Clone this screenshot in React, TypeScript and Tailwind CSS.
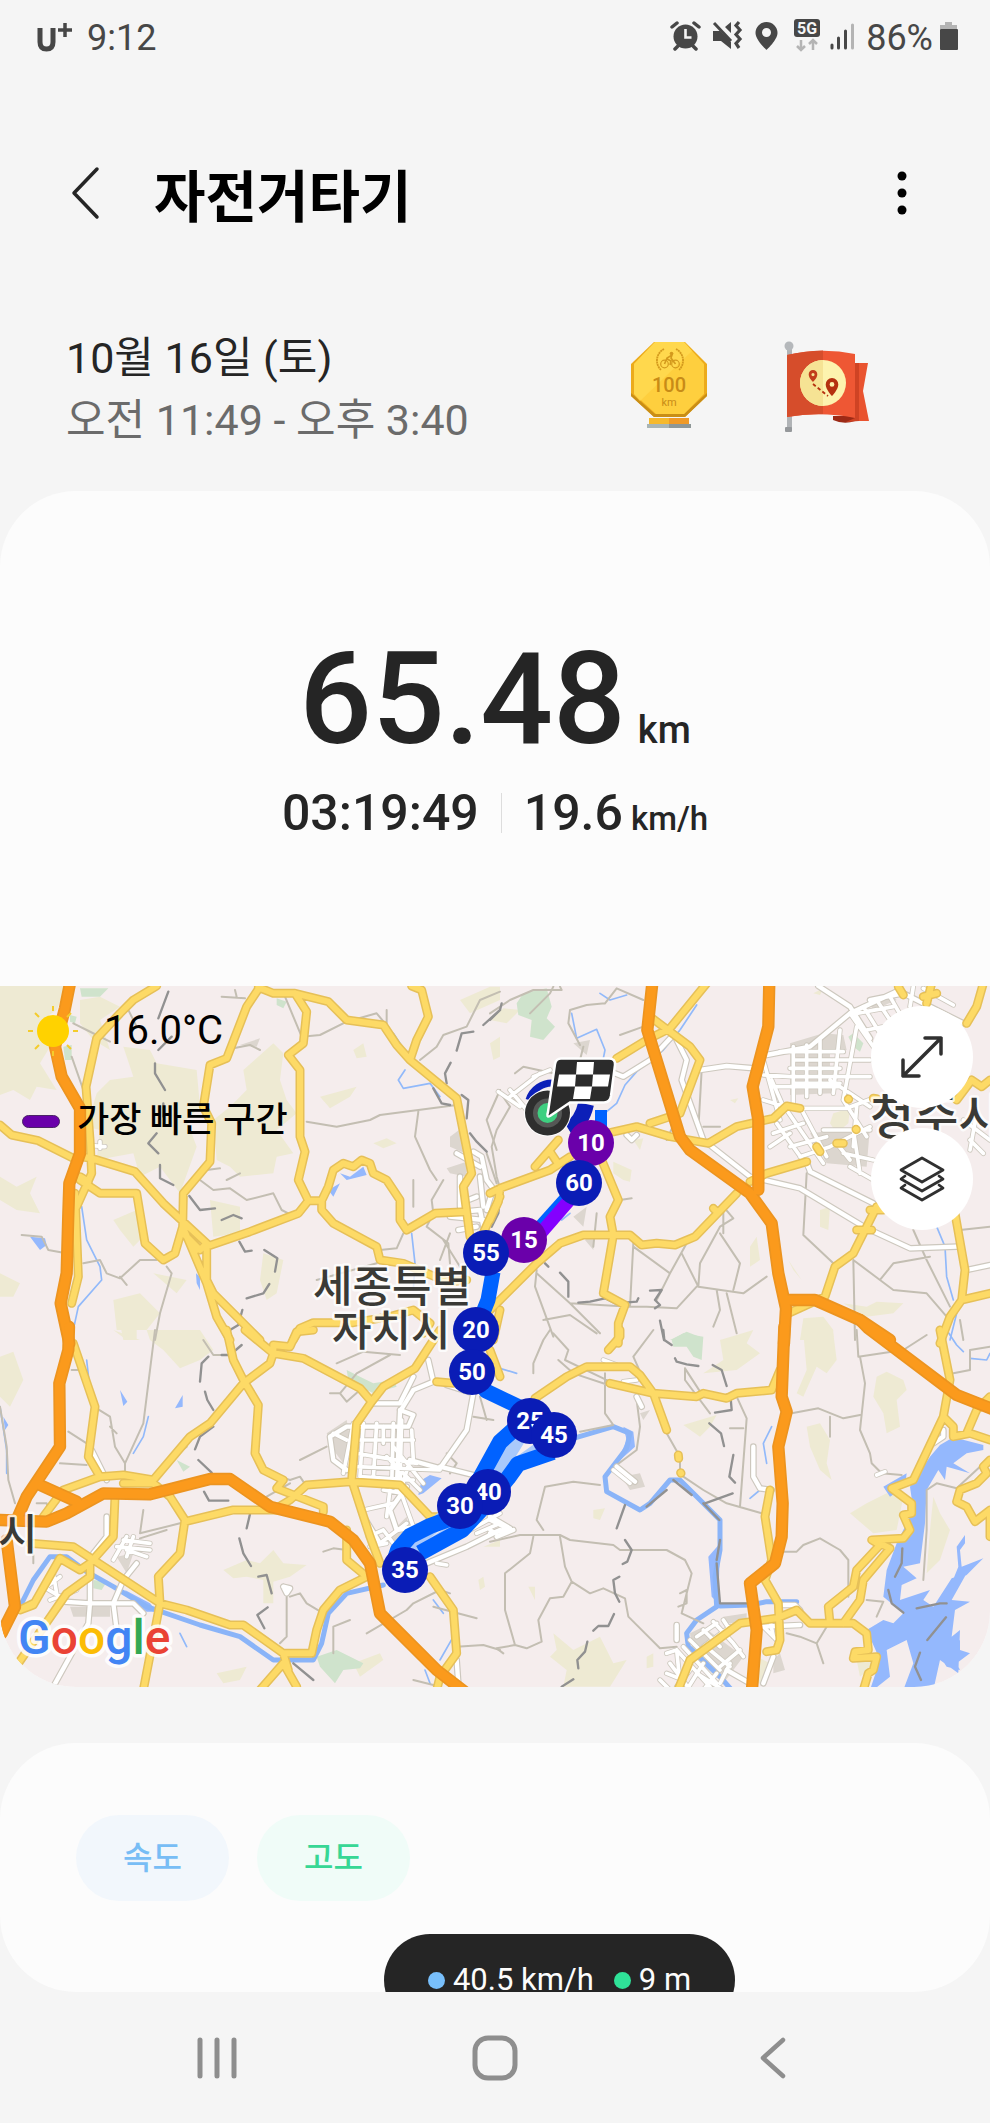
import React from "react";

type Tile = {
  x: number;
  y: number;
  forest: string;
  park: string;
  urban: string;
  lake: string;
  river: string;
  stream: string;
  minor: string;
  rail: string;
  street: string;
  white: string;
  yellow: string;
  orange: string;
};

const tiles: Tile[] = [
  {
    x: 0,
    y: 980,
    forest:
      "M0,18H200L170,90L140,110L150,200L120,250L170,330L110,320L90,360L40,330L0,345Z M240,60L300,50L360,80L300,120L330,210L280,180L240,130Z M370,200L450,210L470,250L590,270L600,380L560,420L590,500L540,640L480,560L420,590L400,520L290,540L300,450L260,440L290,340L330,300L400,290Z M730,270L820,190L850,220L840,300L860,360L890,400L830,450L880,520L830,530L820,580L720,590L690,560L650,540L640,420L690,380L740,330Z M0,590L50,620L110,590L90,640L120,700L50,690L0,660Z M0,880L60,910L40,950L0,950Z M340,720L410,690L430,770L400,800L360,750Z M630,660L720,680L720,760L640,770Z M790,820L850,840L830,940L800,960L780,900Z M340,960L420,940L480,1000L440,1050H350Z M460,880L560,900L530,940Z M1380,60L1470,20H1500V60L1410,100Z M1060,210L1090,190L1100,230L1070,235Z M960,350L1070,320L1050,350L990,385Z M1120,490L1160,475L1190,490L1150,505Z M1470,190L1500,170V230L1480,240Z M360,1030L410,1020V1080H370Z M480,1050H570V1080H500Z",
    park: "M240,25H325L300,50H245Z M210,105L230,110L225,130L210,125Z M190,200L215,195L215,240L195,240Z M830,55L860,65L850,85L830,75Z",
    urban: "M1350,470L1390,440L1395,520L1350,500Z M1340,565L1400,545L1400,590L1350,580Z M720,195L780,175L770,200Z",
    lake: "M1020,580L1050,590L1090,560L1100,585L1040,600Z M985,630L1020,610L1000,650Z M90,770L135,775L140,795L120,810Z M588,880L600,890L600,930L590,910Z",
    river: "",
    stream: "M245,680L260,780L300,860L305,900L235,980L222,1040 M1215,270L1195,300L1210,325L1290,310L1320,350 M1180,160L1210,205 M1235,760L1245,850L1240,930",
    minor:
      "M665,50L735,55M705,30L710,50 M220,130L260,150L330,185M380,80L410,140 M700,205L750,195L780,210 M855,50L905,170L960,165L1040,125L1130,100L1155,130 M1160,90V140 M920,425L1010,440L1110,420L1140,405L1370,375 M1255,395L1245,470L1290,570L1310,600 M1330,600L1295,660L1300,700L1280,740L1345,790L1350,850 M1240,600V680 M215,230L250,330 M65,765L125,770L145,810L190,818 M250,850L300,840L320,880L360,895L420,840L470,840 M360,890L380,915 M500,860L515,880L480,1000L465,1080 M600,600L640,630L690,625L740,660L820,640L845,690L865,700 M680,600L720,580M620,570L660,565 M1140,810L1190,805L1210,760L1240,750 M1130,850L950,900 M1260,240L1310,200L1330,165L1400,140L1440,60L1500,35 M1500,330L1460,420L1490,510 M1460,520L1490,610 M1350,760L1320,840 M1330,780L1380,860",
    rail: "M505,35L475,115 M515,170L475,210 M465,250L465,280L495,330 M490,370V410 M470,460L445,490L475,520 M480,555V595L520,615 M568,648L600,690L645,685 M665,720L700,705L725,715 M718,785L735,815L755,812 M793,810L832,835L825,875 M808,912L790,940L740,955 M727,990L715,1035L690,1050 M1420,155L1385,160L1370,212 M1352,248L1335,280L1340,310 M1500,90L1450,135 M1300,325L1325,370L1350,375 M1385,345L1405,360L1400,415 M1410,460L1430,485L1460,515",
    street: "M275,497L315,500M300,485V505",
    white:
      "M1370,520L1440,560M1420,515L1445,530L1460,600L1490,640M1440,590L1450,680M1380,590V680M1380,670L1430,650 M1390,695L1440,690L1450,740 M1350,710L1450,720 M1375,750L1430,740 M1475,640L1460,690",
    yellow:
      "M470,18L400,60L360,100L290,175L258,320L270,480L275,580L230,680 M0,435L35,465L115,482L220,535 M240,600L300,640H410L435,790L490,840L525,820L548,740 M240,590L265,605 M240,530L275,535L405,575L490,670L620,790 M780,20L740,80L680,235L630,255L610,380L635,430L630,545L550,640L548,740L620,910L650,1010L690,1080 M590,810L750,755L895,700L925,662L895,600L915,515L900,470V270L865,225L910,190L920,95L885,40 M775,22L820,40H885L985,65L1040,120L1150,135L1190,195L1230,240L1370,355L1395,480L1415,580L1390,620L1410,770 M1230,240L1250,180L1285,110L1265,30L1235,18 M925,662H965L985,620L1000,570L1030,550L1060,560L1085,540L1110,550L1120,580L1160,600L1200,660V720L1220,750L1305,700L1400,695 M965,662V690L1000,730L1130,800L1140,840L1210,850L1340,905L1400,900 M555,765L600,810L620,790V900L640,940L780,1080 M880,1080L900,1045L940,1028H1060L1170,1010L1240,990L1290,1030L1270,1060 M1440,780L1500,650 M1480,1080L1500,990 M225,640L235,890L215,970",
    orange: "M212,0L195,85L165,200L185,290L240,385V520L208,610L205,700L200,880L182,970L208,1090",
  },
  {
    x: 490,
    y: 980,
    forest:
      "M0,120L40,85L90,90L50,130Z M370,545L425,570L420,605L400,600L370,580Z M780,800L800,770L810,840L780,860Z M895,840L935,900L910,870Z M990,690L1020,680L1015,750L990,740Z M940,1015L1000,1010L1030,1050V1080H930Z M1060,970L1130,980L1160,965L1240,970L1210,1000L1130,1010Z M430,480L460,475L450,510Z M720,360L745,355L735,370Z M1030,400L1080,385L1075,430L1040,460L1020,430Z M1200,640L1230,620V650Z M970,40L1000,25L990,45Z",
    park: "M80,70L100,40L170,25L185,80L170,115L195,140L160,180L120,170L125,120L85,105Z M540,1080L590,1055L640,1075L630,1080Z M1075,170L1090,160L1120,190L1110,215L1090,200Z",
    urban:
      "M1130,60L1200,40L1220,60L1150,90Z M900,190L1000,160L1060,165L1070,210H1020V270H1050L1030,340L900,345Z M250,710L290,680L280,740Z M285,780L310,760V810Z M250,190L300,180L290,225Z M960,460L1140,440L1130,560L1010,550Z",
    lake: "",
    river: "",
    stream:
      "M410,45L360,60L330,40 M245,100L260,175L320,148L345,210L340,235 M620,75L570,150L520,210L440,275L405,315L380,370L350,395 M1340,740L1365,800L1370,890L1390,960 M1400,1000L1380,1080 M240,700L215,720",
    minor:
      "M0,100L60,60L130,30L215,30L210,20 M120,100L180,40L190,20 M345,70L380,25L460,60M345,70L290,75L240,90L235,130L270,195 M390,165L460,140 M280,200L270,240M75,280L100,260L190,280 M25,330L60,380L20,450L5,500L20,590L30,625 M635,270L625,450 M580,370L530,480 M640,440H690 M700,680L730,715L690,740L630,850L625,920L760,940L830,890 M690,760L750,850L730,930 M700,690V760 M430,790L420,980 M430,800L540,880L500,960 M540,880L590,790 M575,820L625,920 M140,870L135,920L190,1070 M140,880L240,970L420,980H470L560,985L620,920 M160,1020L240,1005L320,1060 M240,970L330,1060 M680,930L690,990L670,1040 M710,940L740,1060 M310,800L320,700 M390,660L425,655 M950,580L940,765L1030,850 M1090,840L1095,1080 M1090,840L1170,900L1210,850L1320,830 M1170,900L1210,930L1310,940L1370,1010 M1270,750L1310,840L1380,980 M1410,750L1500,740 M1410,1020L1420,1080",
    rail: "M35,70L30,90L0,120 M30,650L25,700L5,740 M165,850L175,860M210,878L235,905L235,950 M265,968L300,965L345,955L375,970L440,965L445,955 M480,932L515,930L495,960L510,975L495,985 M510,1022L522,1080",
    street:
      "M910,200V370M950,195V350M990,180V340M1050,150L1030,340M1100,140L1060,360M910,240H1140M870,215H1060M900,265H1050M910,310H1050M820,285L900,290H1140M850,320H1050M820,360L900,385H1070L1150,355M1080,100L1150,200M1120,80L1170,160M1160,60L1220,150M1200,50L1240,120M1100,100L1210,80M1130,150L1230,130M1270,20L1260,80M1300,25L1390,75M860,430L960,570M890,390L1000,550M930,380L1010,530M850,460L940,430M840,500L900,460M900,500L1010,470M930,530L1020,500M1020,500L1140,440M1000,450H1140M1040,490L1080,540M1090,450L1110,580M1060,520L1150,540M1100,380L1090,500M1060,360L1130,470M1440,480L1480,520M1420,420L1500,480M1460,400L1440,510M820,240L870,420M845,300L880,380M60,350L150,280M25,335L90,380M130,290L180,270M60,330L110,390M1020,300L1140,380M1080,560L1150,600",
    white:
      "M830,225L960,200L1080,100L1230,30 M985,18L1080,80L1140,175 M560,180L590,240L575,300L640,480L780,590L930,625L1130,745L1260,805L1400,800 M545,170L480,240L400,290L350,270 M630,270L710,258L795,265 M950,545L960,575L1150,670 M1140,60L1240,40L1420,130 M1430,870L1500,855 M410,465L425,480L440,465",
    yellow:
      "M650,10L540,145L470,180L380,235 M480,110L600,200L630,240L570,400L480,430 M0,640L30,625L180,570L240,530 M135,560L205,480 M180,515L200,545M0,720L25,665L30,625 M350,460L440,440L540,470L655,490L740,440L850,415L890,378L930,385 M335,540L385,660L360,710L370,765L340,940L405,975L385,1030V1090 M0,990L140,850L210,790L280,765H420L455,795L500,790L555,795L615,770L740,640 M780,605L830,580L950,545 M670,685L680,695M1500,300L1475,320L1445,300L1400,360 M1430,130L1460,80L1480,10 M1140,690L1180,690M1160,680L1125,750L1090,820L1035,860L1005,950L895,1000 M1100,750H1145M1395,700L1425,870L1415,960L1380,1010L1350,1090 M1415,960L1500,940 M1225,20L1240,45M1325,10L1310,70M1300,50L1340,40 M980,500L990,515M1040,490H1060M1075,357L1076,358M1150,355L1160,356M1098,448L1099,449",
    orange:
      "M488,0L472,150L570,470L600,510L780,640L845,730L865,880L888,985L882,1090 M838,0L835,140L788,320L805,420V630 M892,960H975L1110,1020L1200,1080",
  },
  {
    x: 0,
    y: 1330,
    forest:
      "M0,80L40,65L70,150L30,230L0,200Z M340,0L420,30H380Z M440,0H600L640,60L600,90L540,115L490,60L450,30Z M670,720L740,690L780,700L820,660L850,700L920,705L870,740L820,755V820L790,820L790,750L740,740L700,745Z M1060,1000L1140,970L1150,990L1080,1040Z M650,1030L740,1010L720,1050L670,1060Z M1435,750L1450,740L1455,770L1440,780Z M1450,650L1500,630V650Z",
    park: "M950,980L1010,960L1090,1000L1080,1015L1030,1020L1005,1060L960,1010Z M1040,120L1080,140L1120,160L1180,150L1190,170L1120,190L1080,170L1045,150Z M280,750L320,755L305,780L280,775Z M530,390L570,410L550,425Z",
    urban: "M980,310L1040,270L1060,370L1030,400L1000,360Z M350,680L400,670L380,730Z M210,830H330V860H220Z M1160,620L1220,560L1230,620L1190,650Z",
    lake: "M360,180L382,215L370,228Z M548,195V230L525,235Z M1265,450L1290,435L1325,445L1270,490L1255,495Z M10,260L25,285L15,300Z M375,780L450,820L470,845H440L400,815Z",
    river: "M60,830L100,750L150,680L200,680L260,725L340,770L440,830L600,885L720,920L820,990H940L965,940L985,850L1040,790L1150,765",
    stream: "M260,90L270,180 M445,260L430,320L400,370 M0,230L20,360V430 M540,910L560,950 M1360,920L1320,990 M1275,1020L1290,1060 M1300,810L1330,850",
    minor:
      "M465,0L430,280L375,400V430 M290,235L330,260L345,350L375,400 M180,400L260,405M205,305L260,340M215,120H235 M0,230L20,350L25,450L45,520 M110,520H140L150,550 M350,310L330,290 M900,390L980,350 M990,190H1020L1040,215L1080,180M1020,190L1070,130L1170,75 M1010,100L1090,65L1200,75 M1340,370L1370,400L1350,430 M1420,260L1480,270M1440,200L1460,270 M430,540L420,610L540,580 M420,625L500,600M1100,910L1220,840L1240,820L1320,780L1350,790 M1300,830L1430,865 M1370,950L1450,945L1500,960 M840,940L860,920V800 M870,800L900,790L920,820L970,850 M1000,970V890L1050,870 M1240,1050L1300,1065 M970,665L1000,655L1040,660 M100,700V640 M610,30L640,75H700M500,400L560,350 M840,440L870,450L900,440L920,470 M800,500L870,460",
    rail: "M725,45L690,75H665 M625,80L605,100L600,155 M615,185L622,210L640,240 M640,290L600,320L585,358 M595,390L635,428 M612,485L627,512H685 M750,552L740,595 M718,625L730,670L753,708 M775,740L800,735L815,790 M803,832L772,855L793,895 M880,1000L940,1050",
    street:
      "M1060,280L1030,430M1090,280L1080,440M1130,280L1120,445M1180,280L1175,470M1205,270L1200,460M1235,300L1240,390M1060,330H1240M1070,370L1250,400M1070,410L1320,420M1080,440L1240,450M1150,290V340M1000,310L1040,330M1150,480L1210,490M1160,380L1260,480M1180,350L1270,460M1230,390L1200,490M1090,540L1180,520M1105,620L1150,600L1180,640M1140,640L1220,580M1110,650L1160,640M1200,480L1240,590M1170,480L1160,560M1410,600L1500,550M1430,610L1500,580M340,690L380,620M350,650L450,660M370,630L450,640M380,660L440,680M400,620L380,680M140,770L180,740M130,770L180,800M160,730L170,790M150,810L230,780M1310,700L1340,705",
    white:
      "M1285,90L1300,155L1240,180L1200,245L1190,480 M1240,140L1200,220L1120,220 M1200,240L1240,255L1225,290H1040L990,320L1000,390L1040,420 M1340,165L1420,190L1400,300L1320,415L1230,390 M1320,410L1420,435L1480,470 M1220,470L1170,540L1190,600L1250,590 M1060,450L1085,550L1140,640 M275,360L320,450 M320,560V620L280,670 M410,700L370,750L340,820L350,900 M270,750V820L265,880L160,1070 M190,815L270,820H400L430,850 M1280,700L1400,650L1500,600 M1370,990L1375,1060 M850,770L870,775L860,790L850,770",
    yellow:
      "M220,40L285,230L265,380L300,440L190,480L130,560 M300,440L370,435L460,450L570,320L630,280L730,160L810,100L820,70L735,0 M680,0L700,90L730,150L775,225L765,370L790,420L850,450L830,475L970,530V545 M820,75V45L870,50L890,5L940,0 M820,70L910,85L1080,175L1115,215L1150,170L1245,115L1320,0 M1115,215L1070,280L1055,450L1110,620L1140,700 M820,540L870,510L920,465L1050,455L1200,465L1290,560H1370 M370,460H460L510,500L555,570L540,670L475,740L480,820L430,1080 M555,575L700,540L830,540 M345,500L340,620L270,700L240,720L180,685L100,825L60,840L100,820 M90,640L220,650L350,735L480,820L560,840L690,885L730,885L850,970H935L950,900L970,840L1020,780L1100,740L1040,690V600 M55,1000L200,790L270,740V700 M780,1080L850,1000L890,1070M850,970L865,1020 M1290,740L1360,840L1370,970L1320,1040L1310,1080 M1310,155L1360,160M1470,60L1500,140",
    orange:
      "M207,-10L205,60L178,160L180,350L120,440L80,500L50,570 M0,570L140,575L200,550L310,490L450,493L630,447H690L810,530L990,575L1060,630L1110,700L1140,850L1310,1020L1400,1090 M120,465L230,515 M20,630L45,830L5,910",
  },
  {
    x: 490,
    y: 1330,
    forest:
      "M940,10H1030L1040,90L1010,130L980,110L940,200L920,190L950,120Z M1160,140L1190,125L1240,150L1250,180L1220,210L1230,290L1190,310L1180,250L1150,200Z M950,290L990,280L1020,330L1010,400L1025,450L990,420L960,350Z M580,285L680,255L660,290L630,320Z M690,30L790,0L770,40L810,70L740,120L640,130L700,90Z M1080,550L1130,520L1190,490L1240,500L1220,600L1150,610Z M1330,500L1350,550L1380,600L1350,690L1310,730L1320,600Z M200,960L190,910L250,960L330,920L370,1000L410,990L360,1070H220L230,1020L180,980Z M310,540L345,535L330,570L310,565Z M115,770H135V810Z M800,980L840,1000L810,1060H780Z M470,980L490,970V1010L470,1015Z M1100,990L1160,1000L1110,1040Z",
    park: "M545,30L580,10L640,20L635,90L610,80L590,50H550Z M65,345L90,335V345Z",
    urban: "M395,440L450,430L465,470L420,480Z M600,910L640,890L760,980L700,1060L610,980Z M850,990L870,970L885,1020L850,1030Z M700,860L770,850V880H700Z M450,250L480,240L460,270Z",
    lake: "M1320,380L1350,345L1390,322L1480,345V360L1430,370L1390,400L1440,430L1370,410L1365,450L1345,420L1310,480L1305,580L1290,700L1240,710L1280,745L1235,765L1230,810L1320,780L1300,810L1330,830L1385,745L1430,730L1385,810L1440,815L1395,840L1385,920L1410,900L1405,1030L1350,990L1330,1080H1240L1270,1000L1250,930L1190,960L1200,1040L1150,1080H1140L1170,990L1130,900L1180,870L1210,880L1240,850L1180,800L1190,720L1220,640L1240,600L1270,540L1260,470Z M1400,650L1425,615V640L1410,660L1415,710L1480,685L1430,735L1385,760L1405,710Z M1350,980L1390,960L1410,930V960L1440,970L1400,1000L1410,1020L1370,1010Z M1180,470L1250,430L1245,470L1200,500Z M400,290L430,305L435,350L380,400L410,330Z M655,680L690,640L685,820L665,800Z",
    river: "M250,325L370,290L420,310L410,355L345,440L350,485L450,540L480,520L540,450H570L640,520L690,570L690,660L675,740L680,830L620,870L590,910L595,950L690,1040L725,1080 M690,828L780,825L830,815H920",
    stream: "M1370,0L1400,45L1420,65 M1440,85L1490,90L1500,70 M845,290L820,340L830,400 M780,505L810,480 M30,115L80,130",
    minor:
      "M180,0L160,30L130,100V130 M205,90L250,130L355,165 M190,10L235,60L225,90L360,155 M345,130V250L370,285L270,305 M490,0L430,80L470,170 M440,210L450,290L440,360L380,405 M530,310L570,380V430 M580,440L640,480L710,520L815,550 M740,200L770,265L750,530 M585,115V150L660,250 M585,115L640,200 M720,295H760 M905,250L985,235L1060,265L1110,255 M1020,260V320 M1105,80L1100,0M1105,80L1240,60L1310,15 M1110,80L1125,160L1110,300L1140,370L1145,400L1175,430L1235,435 M880,665H920L940,645L990,625L1050,660L1075,690V800 M0,635L90,615H210L240,630L370,645L390,660H530L585,690L605,730L575,850 M210,620L225,710L245,755L300,790L340,775L405,805L415,860L460,905L510,955L560,950 M245,755L220,800L180,805L145,870L155,935L110,955L75,945L20,955L40,970 M75,945L45,840V730L120,670L130,620 M160,600L140,570L165,470L250,455L330,465 M575,850L640,880 M570,790L590,780V820L565,830 M1130,810L1180,815L1160,860 M890,910L930,920L980,940L1000,1000 M980,940L1010,890 M1390,130L1440,120V60L1500,50 M1300,750L1310,600V480L1340,460L1400,475L1470,410",
    rail: "M520,0L523,30L545,45 M555,85L560,95L590,103L625,108 M668,105L695,120L710,168 M722,205L725,240L675,248 M658,280L693,310L702,348 M730,375L718,440L735,458 M728,490L645,520 M405,525L380,595 M405,630L425,660L412,695L398,702 M388,740L370,750L375,790L388,815 M372,852L355,888H325L310,902 M292,935L285,965L262,990L265,1015 M250,1048L215,1070 M1237,655L1235,700L1215,740 M1195,780L1205,820L1240,848 M1280,835L1350,820H1370 M1368,862L1312,930 M1290,968L1275,1010L1293,1050 M680,700L690,820H770 M550,450L605,495M640,520L688,570M690,630L680,690 M470,530L530,480",
    street:
      "M640,900L690,950M670,875L730,940L760,980M700,870L720,900M600,930L690,1020M660,960L720,1010M620,920L680,880M640,950L720,890M690,1010L750,960M530,970L560,960L570,1060M540,1000L600,1080M560,960L660,1070M580,950L680,1060M530,1030L580,1050M600,1020L560,1070M640,1000L590,1080M680,1030L640,1080M620,1030L700,1080M510,1050L540,1080M720,1000L690,1060M820,890L860,930M840,870L850,920M370,420L420,460M0,570L60,600M0,600L20,610M340,90L380,105M400,155L440,150M1160,435L1185,425",
    white:
      "M790,350V440L810,475L845,480 M380,410L435,455 M820,890L930,885 M870,825H915L930,840 M440,200L455,230 M850,980L820,1060 M560,885V930 M1330,340L1360,320V300 M20,620L70,600 M0,610L60,595L0,560 M710,1020L780,1060",
    yellow:
      "M390,0V20L355,60 M135,205L230,140L290,110H420L450,135L490,190L620,200L640,190L710,205L740,190L845,180L870,120 M360,160L490,190L530,300 M1350,0L1380,150L1360,260L1270,450L1205,475L1265,520V550L1240,555L1260,600L1240,625L1145,630L1170,645L1100,720L1090,770L1015,830L1020,880 M1170,640L1200,655L1120,750L1110,810L1060,880 M1360,260L1390,290V320L1440,310L1500,330M1430,310L1460,240L1500,200 M1500,390L1480,410L1490,430L1460,460L1410,480L1400,515L1430,530L1455,575L1500,540V620 M560,1090L600,990L750,880L860,865L920,840L960,880H1090L1130,910L1135,960L1095,965L1090,985L1160,980L1150,1020L1135,1030L1120,1080 M840,480L825,560L845,690L825,750L865,820L870,930L860,960L830,965 M565,375L566,385M572,428L573,430",
    orange:
      "M883,-10L875,200L890,245L865,350L878,520L875,620L855,700L780,760L800,900L785,1090 M1110,-30L1135,-5L1400,195L1510,238",
  },
];

const layers: { key: keyof Tile; fill?: string; stroke?: string; width?: number }[] = [
  { key: "forest", fill: "#eeead3" },
  { key: "park", fill: "#cfe3cc" },
  { key: "urban", fill: "#dcd6cf" },
  { key: "lake", fill: "#94b8fd" },
  { key: "river", stroke: "#8ab4f8", width: 15 },
  { key: "stream", stroke: "#91b9fa", width: 5 },
  { key: "minor", stroke: "#c3beb2", width: 6 },
  { key: "rail", stroke: "#919191", width: 7 },
  { key: "street", stroke: "#cdc8be", width: 16 },
  { key: "white", stroke: "#cdc8be", width: 20 },
  { key: "street", stroke: "#ffffff", width: 11 },
  { key: "white", stroke: "#ffffff", width: 13 },
  { key: "yellow", stroke: "#e6c058", width: 27 },
  { key: "yellow", stroke: "#fdda66", width: 18 },
  { key: "orange", stroke: "#ec9420", width: 37 },
  { key: "orange", stroke: "#fb9a1c", width: 27 },
];

const markers = [
  { km: 10, x: 591, y: 1143, fast: true },
  { km: 60, x: 579, y: 1183, fast: false },
  { km: 15, x: 524, y: 1240, fast: true },
  { km: 55, x: 486, y: 1253, fast: false },
  { km: 20, x: 476, y: 1330, fast: false },
  { km: 50, x: 472, y: 1372, fast: false },
  { km: 25, x: 530, y: 1421, fast: false },
  { km: 45, x: 554, y: 1435, fast: false },
  { km: 40, x: 488, y: 1492, fast: false },
  { km: 30, x: 460, y: 1506, fast: false },
  { km: 35, x: 405, y: 1570, fast: false },
];

function PlaceLabel({ x, y, size, children }: { x: number; y: number; size: number; children: string }) {
  return (
    <text
      x={x}
      y={y}
      fontSize={size}
      fontWeight="500"
      className="font-['Noto_Sans_CJK_KR',sans-serif]"
      fill="#3a3a36"
      stroke="#ffffff"
      strokeOpacity="0.8"
      strokeWidth="5"
      strokeLinejoin="round"
      paintOrder="stroke"
    >
      {children}
    </text>
  );
}

function RouteMap() {
  return (
    <svg
      viewBox="0 986 990 701"
      preserveAspectRatio="xMidYMid slice"
      className="block h-auto w-full"
      role="img"
      aria-label="이동 경로 지도"
    >
      <rect y="986" width="990" height="701" fill="#f5eded" />
      {layers.map((layer, i) => (
        <g
          key={i}
          fill={layer.fill ?? "none"}
          stroke={layer.stroke ?? "none"}
          strokeWidth={layer.width}
          strokeLinejoin="round"
          strokeLinecap="round"
        >
          {tiles.map((t) => (
            <path key={`${t.x}-${t.y}`} transform={`translate(${t.x} ${t.y}) scale(0.33333)`} d={String(t[layer.key])} />
          ))}
        </g>
      ))}

      <PlaceLabel x={313} y={1302} size={43}>세종특별</PlaceLabel>
      <PlaceLabel x={332} y={1346} size={43}>자치시</PlaceLabel>
      <PlaceLabel x={870} y={1134} size={48}>청주시</PlaceLabel>
      <PlaceLabel x={-2} y={1550} size={43}>시</PlaceLabel>

      <g fill="none" strokeLinejoin="round">
        <path d="M525,1428L490,1485L455,1507L395,1560 M552,1440L510,1470L470,1520L410,1560" stroke="#a9c9fb" strokeWidth="14" />
        <path d="M601,1110V1135" stroke="#0062ff" strokeWidth="12" />
        <path d="M493,1272L488,1300L476,1330 M472,1372L486,1391L530,1412" stroke="#0062ff" strokeWidth="15" />
        <path d="M520,1424L500,1442L478,1482L460,1515L430,1526L410,1536L398,1550L394,1562" stroke="#0062ff" strokeWidth="16" />
        <path d="M553,1452L518,1464L508,1478L490,1500L462,1530L420,1553" stroke="#0062ff" strokeWidth="16" />
        <path d="M571,1194L536,1233" stroke="#0062ff" strokeWidth="15" />
        <path d="M573,1196L540,1234" stroke="#8400ff" strokeWidth="13" />
        <path d="M529,1100A24,24 0 0 1 554,1083" stroke="#0c1fb8" strokeWidth="7" />
        <path d="M569,1130Q582,1122 586,1104" stroke="#0c1fb8" strokeWidth="16" />
      </g>

      {markers.map((m) => (
        <g key={m.km}>
          <circle cx={m.x} cy={m.y} r="23" fill={m.fast ? "#6a00aa" : "#0a1cb6"} />
          <text
            x={m.x}
            y={m.y + 8}
            textAnchor="middle"
            fontSize="24"
            fontWeight="700"
            fill="#ffffff"
            className="font-[Roboto,sans-serif]"
          >
            {m.km}
          </text>
        </g>
      ))}

      <circle cx="547.5" cy="1113" r="23.5" fill="#ffffff" />
      <circle cx="547.5" cy="1113" r="22.5" fill="#2e2e2e" />
      <circle cx="547.5" cy="1113" r="14.5" fill="#555755" />
      <circle cx="547.5" cy="1113" r="10" fill="#3ecf80" />
      <path
        d="M561,1058.5H609Q615.500,1058.500 615,1065L611,1096Q610,1102.500 604,1102.500H570L550,1116Q546,1118 548,1112L555,1064Q556,1058.500 561,1058.500Z"
        fill="#2b2b2b"
        stroke="#ffffff"
        strokeWidth="2.5"
      />
      <path
        d="M577,1062H594L593,1074.500H576Z M559,1074.500H576L575,1086.500H557Z M593,1074.500H610L608,1086.500H592Z M575,1086.500H592L590,1099H573Z"
        fill="#ffffff"
      />

      <text
        x="18"
        y="1654"
        fontSize="48"
        fontWeight="500"
        className="font-[Roboto,sans-serif]"
        stroke="#ffffff"
        strokeOpacity="0.85"
        strokeWidth="7"
        strokeLinejoin="round"
        paintOrder="stroke"
      >
        <tspan fill="#4285f4">G</tspan>
        <tspan fill="#ea4335">o</tspan>
        <tspan fill="#fbbc05">o</tspan>
        <tspan fill="#4285f4">g</tspan>
        <tspan fill="#34a853">l</tspan>
        <tspan fill="#ea4335">e</tspan>
      </text>
    </svg>
  );
}

function StatusIcons() {
  return (
    <svg width="186" height="44" viewBox="670 16 186 44" aria-hidden="true" fill="#474747">
      <circle cx="685.5" cy="36.500" r="12" />
      <path d="M672,27L677,23M699,27L694,23M675,49L679,45M696,49L692,45" stroke="#474747" strokeWidth="3.500" strokeLinecap="round" />
      <path d="M685.500,29V37.500H691.500" fill="none" stroke="#f5f5f5" strokeWidth="2.600" />
      <path d="M713,31H720L731,42V49L721,41H713Z M725,27L731,22V33Z" />
      <path d="M714,23L731,41" stroke="#474747" strokeWidth="3" />
      <path d="M739,22L736,25.500L740,30L736,34.500L740,39L736,43.500L739,48" fill="none" stroke="#474747" strokeWidth="3.200" />
      <path fillRule="evenodd" d="M766.500,22A11,11 0 0 0 755.500,33C755.500,40 766.500,50 766.500,50S777.500,40 777.500,33A11,11 0 0 0 766.500,22ZM766.500,28A4.500,4.500 0 1 1 766.500,37A4.500,4.500 0 1 1 766.500,28Z" />
      <rect x="794" y="19" width="26" height="18" rx="3" />
      <text x="807" y="33.500" fontSize="16" fontWeight="700" textAnchor="middle" fill="#f5f5f5" className="font-[Roboto,sans-serif]">
        5G
      </text>
      <path d="M801,40V50M797,46L801,50L805,46M813,50V40M809,44L813,40L817,44" fill="none" stroke="#b4b4b4" strokeWidth="2.500" />
      <path d="M832,45V48M838.500,38V48M845.500,31V48" stroke="#474747" strokeWidth="3" strokeLinecap="round" />
      <path d="M852.500,25V48" stroke="#b4b4b4" strokeWidth="3" strokeLinecap="round" />
    </svg>
  );
}

function Medal() {
  return (
    <svg width="78" height="90" viewBox="0 0 78 90" role="img" aria-label="100 km 메달">
      <rect x="17" y="83" width="44" height="4" fill="#a9b5b5" />
      <path d="M39,83H61V87H39Z" fill="#8e9797" />
      <rect x="19" y="77" width="20" height="6" fill="#f6b92c" />
      <rect x="39" y="77" width="20" height="6" fill="#f09a27" />
      <path d="M24,1H55L77,23V55L55,76H24L1,55V23Z" fill="#ecab1c" />
      <path d="M1,55L24,76H55L77,55V52L54,73H25L1,52Z" fill="#c98e16" />
      <path d="M25,1H54L74,23V53L54,73H26L4,53V23Z" fill="#fecf3e" />
      <path d="M25,1H54L62,10L10,60L4,53V23Z" fill="#ffd951" opacity="0.8" />
      <g fill="none" stroke="#d49a1d" strokeWidth="1.800">
        <path d="M34,8A13,13 0 0 0 31,29" strokeDasharray="2 0.5" />
        <path d="M46,8A13,13 0 0 1 49,29" strokeDasharray="2 0.5" />
        <circle cx="34.500" cy="23" r="3.800" strokeWidth="1.200" />
        <circle cx="45.500" cy="23" r="3.800" strokeWidth="1.200" />
        <path d="M34.500,23L37,17L42,14L41,17L45.500,23M37,18L41,20L40,24" strokeWidth="1.600" />
      </g>
      <circle cx="41.500" cy="12.500" r="1.800" fill="#d49a1d" />
      <text x="39" y="51" textAnchor="middle" fontSize="20" fontWeight="500" fill="#c88b17" className="font-[Roboto,sans-serif]">
        100
      </text>
      <text x="39" y="65" textAnchor="middle" fontSize="11" fill="#c88b17" className="font-[Roboto,sans-serif]">
        km
      </text>
    </svg>
  );
}

function FlagBadge() {
  return (
    <svg width="86" height="92" viewBox="0 0 86 92" role="img" aria-label="경로 깃발">
      <rect x="3" y="8" width="5" height="80" fill="#b0b3b6" />
      <rect x="1" y="86" width="7" height="5" rx="1" fill="#95989b" />
      <circle cx="5" cy="5" r="4.500" fill="#b5b8bb" />
      <path d="M71,22H84L79,50L85,80H62Z" fill="#e9532f" />
      <path d="M49,75L71,75V80Q60,84 49,79Z" fill="#9c2a16" />
      <path d="M71,22V77L62,81L75,80V22Z" fill="#cf4324" />
      <path d="M3,14Q37,6 71,13V77Q37,70 3,76Z" fill="#ee5734" />
      <path d="M3,14Q20,10 39,9.500V73Q20,73 3,76Z" fill="#d64d2b" />
      <circle cx="39" cy="42" r="23" fill="#fdf3ae" />
      <path d="M39,19A23,23 0 0 0 39,65Z" fill="#f6e394" />
      <path fillRule="evenodd" d="M29,29A4.300,4.300 0 0 0 24.700,33.500C24.700,37 29,41 29,41S33.300,37 33.300,33.500A4.300,4.300 0 0 0 29,29ZM29,32A1.500,1.500 0 1 1 29,35.200A1.500,1.500 0 1 1 29,32Z" fill="#c23d1c" />
      <path fillRule="evenodd" d="M48,37A6.300,6.300 0 0 0 41.700,43.500C41.700,48.500 48,55 48,55S54.300,48.500 54.300,43.500A6.300,6.300 0 0 0 48,37ZM48,41A2.300,2.300 0 1 1 48,45.800A2.300,2.300 0 1 1 48,41Z" fill="#b5310f" />
      <path d="M29,43L44,55" stroke="#b5310f" strokeWidth="1.800" strokeDasharray="3.500 2.500" />
    </svg>
  );
}

export default function App() {
  return (
    <div className="flex min-h-screen flex-col bg-[#f5f5f5] font-[Roboto,'Noto_Sans_CJK_KR',sans-serif] text-[#252525]">
      <div className="flex h-19 items-center justify-between pr-8 pl-9 text-4xl text-[#474747]">
        <div className="flex items-center gap-3.5">
          <svg width="37" height="34" viewBox="0 0 37 34" aria-label="U+" role="img" fill="none" stroke="#474747">
            <path d="M4,7V21Q4,28 10.500,28Q17,28 17,21V7" strokeWidth="5" />
            <path d="M29,2V16M22,9H36" strokeWidth="3.500" />
          </svg>
          <span>9:12</span>
        </div>
        <div className="flex items-center gap-2.5">
          <StatusIcons />
          <div className="flex items-center gap-1.5">
            <span>86%</span>
            <svg width="19" height="34" viewBox="0 0 19 34" aria-hidden="true">
              <path d="M6,1H13V4H18V8H1V4H6Z" fill="#b4b4b4" />
              <rect x="1" y="8" width="18" height="21" rx="1" fill="#474747" />
            </svg>
          </div>
        </div>
      </div>

      <header className="flex items-center justify-between px-16 pt-[61px]">
        <div className="flex items-center gap-[46px]">
          <button type="button" aria-label="뒤로" className="flex h-28 w-11 items-center justify-center">
            <svg width="30" height="54" viewBox="0 0 30 54" fill="none" stroke="#252525" strokeWidth="3.500" strokeLinecap="round" strokeLinejoin="round" aria-hidden="true">
              <path d="M26,3L3,27L26,51" />
            </svg>
          </button>
          <h1 className="pt-2.5 text-[56px] leading-none font-bold text-black">자전거타기</h1>
        </div>
        <button type="button" aria-label="더보기" className="flex h-28 w-12 items-center justify-center">
          <svg width="12" height="46" viewBox="0 0 12 46" fill="#000000" aria-hidden="true">
            <circle cx="6" cy="6" r="4.500" />
            <circle cx="6" cy="23" r="4.500" />
            <circle cx="6" cy="40" r="4.500" />
          </svg>
        </button>
      </header>

      <section className="flex items-start justify-between px-[66px] pt-[78px] pb-[40px]">
        <div className="text-[43px] leading-[62px]">
          <p>10월 16일 (토)</p>
          <p className="text-[#6b6b6b]">오전 11:49 - 오후 3:40</p>
        </div>
        <div className="flex gap-19 pt-3.5 pr-[54px]">
          <Medal />
          <FlagBadge />
        </div>
      </section>

      <main className="flex flex-1 flex-col gap-14">
        <section className="overflow-hidden rounded-[76px] bg-[#fcfcfc]">
          <div className="flex flex-col items-center pt-[138px] pb-[141px] font-medium">
            <p className="flex items-baseline gap-3 text-[128px] leading-[140px]">
              65.48 <span className="text-[38px] leading-none">km</span>
            </p>
            <div className="flex items-center pt-3 text-[50px] leading-[64px]">
              <span>03:19:49</span>
              <span className="mx-[22px] h-10 w-px bg-[#dddddd]" />
              <span className="flex items-baseline gap-2">
                19.6 <span className="text-[33px] leading-none">km/h</span>
              </span>
            </div>
          </div>

          <div className="relative">
            <RouteMap />
            <div className="absolute top-5 left-7 flex items-center gap-[26px] text-[40px] text-black">
              <svg width="50" height="50" viewBox="0 0 50 50" aria-hidden="true">
                <circle cx="25" cy="25" r="16" fill="#ffd200" />
                <path
                  d="M25,0V5M25,45V50M0,25H5M45,25H50M7,7L11,11M39,39L43,43M43,7L39,11M11,39L7,43"
                  stroke="#f4cc2c"
                  strokeWidth="2"
                />
              </svg>
              <span className="leading-[50px]">16.0°C</span>
            </div>
            <div className="absolute top-[110px] left-[22px] flex items-center gap-[17px] text-[35px] leading-[50px] font-medium text-black">
              <span className="h-[13px] w-[38px] rounded-full border border-[#4b2466] bg-[#6a00aa]" />
              <span>가장 빠른 구간</span>
            </div>
            <div className="absolute top-5 right-[17px] flex flex-col gap-5">
              <button type="button" aria-label="지도 확대" className="flex size-[102px] items-center justify-center rounded-full bg-white">
                <svg width="42" height="42" viewBox="0 0 42 42" fill="none" stroke="#303030" strokeWidth="3.500" strokeLinecap="round" strokeLinejoin="round" aria-hidden="true">
                  <path d="M2,40L40,2M24,2H40V18M2,24V40H18" />
                </svg>
              </button>
              <button type="button" aria-label="지도 유형" className="flex size-[102px] items-center justify-center rounded-full bg-white">
                <svg width="46" height="46" viewBox="0 0 46 46" fill="none" stroke="#303030" strokeWidth="2.800" strokeLinejoin="round" strokeLinecap="round" aria-hidden="true">
                  <path d="M23,2L44,14L23,26L2,14Z" />
                  <path d="M6,20L2,23L23,35L44,23L40,20" />
                  <path d="M6,29L2,32L23,44L44,32L40,29" />
                </svg>
              </button>
            </div>
          </div>
        </section>

        <section className="relative h-[249px] overflow-hidden rounded-[76px] bg-[#fcfcfc] px-19 pt-[72px]">
          <div className="flex gap-7 text-[32px] font-medium">
            <button type="button" className="h-[86px] w-[153px] rounded-full bg-[#f2f7fc] text-[#78bdf5]">
              속도
            </button>
            <button type="button" className="h-[86px] w-[153px] rounded-full bg-[#f0fcf8] text-[#37d795]">
              고도
            </button>
          </div>
          <div className="absolute top-[191px] left-[384px] flex h-[92px] w-[351px] items-center justify-center gap-5 rounded-[46px] bg-[#252525] text-[31px] text-[#fcfcfc]">
            <span className="flex items-center gap-2">
              <span className="size-[17px] rounded-full bg-[#78bffb]" />
              40.5 km/h
            </span>
            <span className="flex items-center gap-2">
              <span className="size-[17px] rounded-full bg-[#2fe298]" />9 m
            </span>
          </div>
        </section>
      </main>

      <nav className="grid h-33 grid-cols-3 items-center px-[78px]">
        <button type="button" aria-label="최근 앱" className="flex h-full items-center justify-center">
          <svg width="42" height="42" viewBox="0 0 42 42" stroke="#8e8e8e" strokeWidth="5" strokeLinecap="round" aria-hidden="true">
            <path d="M4,3V39M21,3V39M38,3V39" />
          </svg>
        </button>
        <button type="button" aria-label="홈" className="flex h-full items-center justify-center">
          <svg width="46" height="46" viewBox="0 0 46 46" fill="none" stroke="#8e8e8e" strokeWidth="5" aria-hidden="true">
            <rect x="3" y="3" width="40" height="40" rx="13" />
          </svg>
        </button>
        <button type="button" aria-label="이전" className="flex h-full items-center justify-center">
          <svg width="28" height="42" viewBox="0 0 28 42" fill="none" stroke="#8e8e8e" strokeWidth="4.500" strokeLinecap="round" strokeLinejoin="round" aria-hidden="true">
            <path d="M24,3L4,21L24,39" />
          </svg>
        </button>
      </nav>
    </div>
  );
}
